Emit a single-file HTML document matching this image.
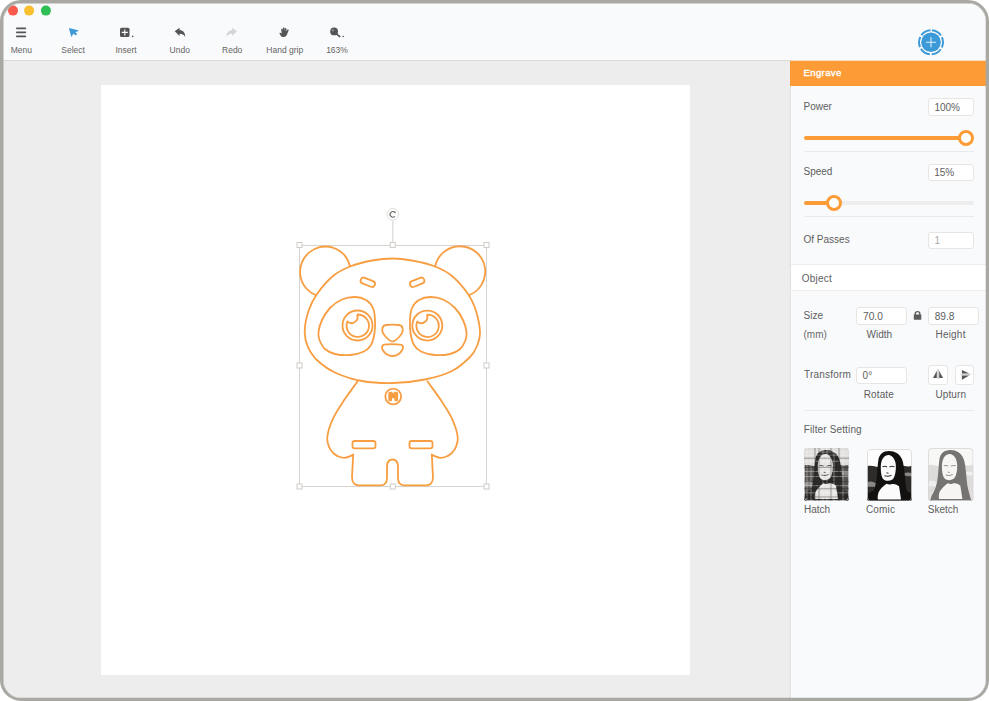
<!DOCTYPE html>
<html><head><meta charset="utf-8">
<style>
*{margin:0;padding:0;box-sizing:border-box}
html,body{width:989px;height:701px;background:#fff;overflow:hidden;font-family:"Liberation Sans",sans-serif}
.win{position:absolute;left:0;top:0;width:989px;height:701px;border:3px solid #a9a8a3;border-radius:21px;overflow:hidden;background:#f9fafb}
.a{position:absolute}
.t{position:absolute;white-space:nowrap;line-height:1}
.tb{position:absolute;top:0;left:0;width:983px;height:58px;background:#f9fafb;border-bottom:1px solid #dcdad7}
.lab{position:absolute;width:60px;text-align:center;font-size:8.5px;color:#656565;line-height:1;top:42.5px}
.canvas{position:absolute;left:0;top:58px;width:787px;height:640px;background:#ededed}
.page{position:absolute;left:98px;top:24px;width:589px;height:590px;background:#fff}
.panel{position:absolute;left:787px;top:58px;width:196px;height:640px;background:#f9fafc;border-left:1px solid #e0dfdc;box-shadow:inset 1px 0 #fdfeff}
.pl{position:absolute;font-size:10px;color:#5e5e5e;line-height:1;white-space:nowrap;margin-top:-1px}
.inp{position:absolute;background:#fff;border:1px solid #e8e6e3;border-radius:3px}
.sep{position:absolute;height:1px;background:#ebeae9}
.img{position:absolute;border-radius:3px;overflow:hidden;border:0px solid #ddd;line-height:0}
.h{position:absolute;width:6px;height:6px;background:#fff;border:1px solid #c9c6c2}
</style></head><body>
<svg width="0" height="0" style="position:absolute"><defs>
<filter id="bl" x="0" y="0" width="1" height="1"><feGaussianBlur stdDeviation=".5"/></filter>
<symbol id="mona" viewBox="0 0 45 52">
 <rect width="45" height="52" fill="var(--sky)"/>
 <path fill="var(--land)" d="M0,17 C6,15.5 9,18.5 13,17.5 L31,17 C36,15.5 40,18.5 45,16.5 L45,52 L0,52Z"/>
 <path fill="var(--lite)" d="M0,33 C4,31 8,33 10,35 L9,38 C5,37 2,38 0,37Z M37,24 C40,22.5 43,23.5 45,24 L45,27 C42,27 39,27 37,26Z"/>
 <path fill="var(--dress)" d="M0,44 C5,42 9,40 12,40 L34,40 C38,41 42,42 45,44 L45,52 L0,52Z"/>
 <path fill="var(--hair)" d="M22,2 C16,2 12.5,5.5 11.5,10 C10.5,15 10.5,22 9.5,30 C8.8,36 7,42 3.5,47 L2,52 L43,52 C41.5,47 40,42 38.8,36 C37.8,28 37.5,20 36,13 C34,5 28,2 22,2Z"/>
 <path fill="var(--face)" d="M21,6 C16.5,6.5 14,11 13.8,17.5 C13.7,23 14.5,28 16.5,30 C18.5,32 22.5,32 25,30.5 C27.5,29 28.8,24 28.9,17.5 C29,11 25.5,5.7 21,6Z"/>
 <path fill="var(--face)" d="M19.5,34.5 C16,37 13,40 11.5,43 C10.5,46 10.5,49 11,50 L34,50 C33.5,46 32.8,42 32,37 C30,35 27,34 24,35 C22,35.5 21,35 19.5,34.5Z"/>
 <path stroke="var(--feat)" stroke-width="1" fill="none" d="M15.5,17.5 Q18,16.5 20,17.8 M22.5,17.8 Q25,16.5 27.5,17.5 M19.5,23.5 L21.5,24 M17.5,26.5 Q21,27.5 24.5,26"/>
 <rect x=".5" y=".5" width="44" height="51" rx="3" fill="none" stroke="#d9d6d3" stroke-width=".8"/>
</symbol></defs></svg>
<div class="win">
 <div class="tb">
  <!-- icons -->
  <svg class="a" style="left:-3px;top:-3px" width="989" height="60" viewBox="0 0 989 60">
   <circle cx="13" cy="10.6" r="5" fill="#fa5a4b"/><circle cx="29.1" cy="10.6" r="5" fill="#f9bf2f"/><circle cx="45.9" cy="10.6" r="5" fill="#2fbe53"/>
   <g fill="#555">
    <rect x="16" y="27.6" width="10.2" height="1.6" rx=".8"/>
    <rect x="16" y="31.6" width="10.2" height="1.6" rx=".8"/>
    <rect x="16" y="35.6" width="10.2" height="1.6" rx=".8"/>
   </g>
   <path fill="#3d98d6" d="M68.9,28.1 L79,30.6 L75.3,32.4 L77.5,34.2 L75.2,35.3 L73.6,33.6 L71.3,37 Z"/>
   <rect x="120" y="27.7" width="9.5" height="9.4" rx="1.5" fill="#555"/>
   <path stroke="#fff" stroke-width="1.1" d="M121.8,32.4 H127.8 M124.8,29.4 V35.4"/>
   <circle cx="132.6" cy="36.4" r=".8" fill="#555"/>
   <path fill="#555" d="M174.7,31.2 L179.6,27.7 L179.6,29.9 C183.4,30.2 185.4,33 185.2,37 C184,34.7 182.2,33.8 179.6,33.8 L179.6,36 Z"/>
   <path fill="#d6d6d6" d="M237,31.2 L232.1,27.7 L232.1,29.9 C228.3,30.2 226.3,33 226.5,37 C227.7,34.7 229.5,33.8 232.1,33.8 L232.1,36 Z"/>
   <path fill="#555" d="M283.6,27.5 C284.4,27.5 284.6,28.2 284.6,28.8 L284.6,31 L285,28.6 C285.2,27.8 286.5,27.9 286.5,28.9 L286.1,31.4 L287.3,29.8 C287.8,29.1 289,29.6 288.6,30.5 L287,34.6 C286.2,36.4 285,37.1 283.5,37.1 C282,37.1 281.2,36.4 280.4,35.2 L279.6,33.8 C279.2,33 280.1,32.4 280.8,33 L281.6,33.8 L281.2,29.4 C281.1,28.5 282.4,28.4 282.6,29.2 L282.8,31 L282.8,28.6 C282.8,28 283,27.5 283.6,27.5Z"/>
   <circle cx="334.1" cy="31.4" r="3.9" fill="#555"/>
   <path d="M336.5,33.8 L339.8,36.6" stroke="#555" stroke-width="1.6" stroke-linecap="round"/>
   <circle cx="332.8" cy="30.2" r="1.2" fill="#888"/>
   <circle cx="343.2" cy="36.5" r=".8" fill="#555"/>
   <!-- add button -->
   <circle cx="931" cy="42.3" r="12" fill="none" stroke="#3d9ad8" stroke-width="2" stroke-dasharray="10.57 2" stroke-dashoffset="-1" transform="rotate(-90 931 42.3)"/>
   <circle cx="931" cy="42.3" r="9.8" fill="#3d9ad8"/>
   <path stroke="#dbeefa" stroke-width="1.1" d="M926,42.3 H936 M931,37.3 V47.3"/>
  </g>
  </svg>
  <div class="lab" style="left:-11.6px">Menu</div>
  <div class="lab" style="left:40.1px">Select</div>
  <div class="lab" style="left:93.1px">Insert</div>
  <div class="lab" style="left:146.75px">Undo</div>
  <div class="lab" style="left:199.2px">Redo</div>
  <div class="lab" style="left:251.8px">Hand grip</div>
  <div class="lab" style="left:304px">163%</div>
 </div>
 <div class="canvas">
  <div class="page"></div>
 </div>
 <div class="panel">
  <div class="a" style="left:-1px;top:-1px;width:196px;height:1px;background:#f6dcc0"></div><div class="a" style="left:-1px;top:0;width:196px;height:25px;background:#fd9b36"></div>
  <div class="pl" style="left:12.5px;top:8px;color:#fff;font-size:9.6px;letter-spacing:.35px;-webkit-text-stroke:.35px #fff">Engrave</div>
  <div class="pl" style="left:12.5px;top:42px">Power</div>
  <div class="inp" style="left:137px;top:37px;width:46px;height:18px"></div>
  <div class="pl" style="left:143.4px;top:43px">100%</div>
  <div class="a" style="left:13px;top:75.2px;width:162px;height:3.6px;border-radius:2px;background:#fd9b36"></div>
  <div class="a" style="left:167px;top:69px;width:16px;height:16px;border-radius:50%;background:#fff;border:3.3px solid #fd9b36"></div>
  <div class="sep" style="left:13px;top:90px;width:170px"></div>
  <div class="pl" style="left:12.5px;top:107px">Speed</div>
  <div class="inp" style="left:137px;top:103px;width:46px;height:17px"></div>
  <div class="pl" style="left:143.2px;top:108px">15%</div>
  <div class="a" style="left:13px;top:140px;width:170px;height:3.6px;border-radius:2px;background:#ededed"></div>
  <div class="a" style="left:13px;top:140px;width:30px;height:3.6px;border-radius:2px;background:#fd9b36"></div>
  <div class="a" style="left:34.6px;top:133.9px;width:16px;height:16px;border-radius:50%;background:#fff;border:3.3px solid #fd9b36"></div>
  <div class="sep" style="left:13px;top:155px;width:170px"></div>
  <div class="pl" style="left:12.5px;top:175px">Of Passes</div>
  <div class="inp" style="left:137px;top:170.5px;width:46px;height:17px"></div>
  <div class="pl" style="left:143.6px;top:176px;color:#aaa">1</div>
  <div class="a" style="left:0;top:203px;width:195px;height:27px;background:#fff;border-top:1px solid #efeeed;border-bottom:1px solid #efeeed"></div>
  <div class="pl" style="left:10.8px;top:213.5px;letter-spacing:.2px">Object</div>
  <div class="pl" style="left:12.5px;top:250.5px">Size</div>
  <div class="pl" style="left:12.5px;top:269.5px;color:#6a6a6a">(mm)</div>
  <div class="inp" style="left:65px;top:246px;width:50.5px;height:18px"></div>
  <div class="pl" style="left:72px;top:252px;font-size:10.2px">70.0</div>
  <div class="inp" style="left:137.4px;top:246px;width:50.2px;height:18px"></div>
  <div class="pl" style="left:143.7px;top:252px;font-size:10.2px">89.8</div>
  <div class="pl" style="left:75.5px;top:270px">Width</div>
  <div class="pl" style="left:144.5px;top:270px;letter-spacing:.2px">Height</div>
  <div class="pl" style="left:13px;top:310px;letter-spacing:.22px">Transform</div>
  <div class="inp" style="left:65px;top:305.7px;width:50.5px;height:17px"></div>
  <div class="pl" style="left:71.6px;top:311px">0&deg;</div>
  <div class="inp" style="left:137px;top:304px;width:20px;height:20px"></div>
  <div class="inp" style="left:164px;top:304px;width:19px;height:20px"></div>
  <div class="pl" style="left:72.8px;top:330px;letter-spacing:.1px">Rotate</div>
  <div class="pl" style="left:144.5px;top:330px;letter-spacing:.1px">Upturn</div>
  <div class="sep" style="left:13px;top:348.5px;width:170px"></div>
  <div class="pl" style="left:12.7px;top:365px;letter-spacing:.14px">Filter Setting</div>
  <svg class="a" style="left:0;top:0" width="195" height="460" viewBox="791 61 195 460">
   <path fill="#5e5c5a" d="M913.8,314.6 L914.6,314.6 L914.6,313.5 A2.95,2.6 0 0 1 920.5,313.5 L920.5,314.6 L921.3,314.6 L921.3,319.3 Q921.3,319.8 920.8,319.8 L914.3,319.8 Q913.8,319.8 913.8,319.3Z M916,314.6 L919.1,314.6 L919.1,313.6 A1.55,1.4 0 0 0 916,313.6Z"/>
   <path fill="#d3d2d0" d="M937,369.2 H939 V378.8 H937Z M960.6,373.7 H970.9 V375.2 H960.6Z"/>
   <path fill="#575553" d="M933,377.9 L936.8,370.8 L936.8,377.9Z M939.2,370.8 L943,377.9 L939.2,377.9Z M961.9,370 L969.3,373.4 L961.9,373.4Z M961.9,375.5 L969.3,375.5 L961.9,379.7Z"/>
  </svg>
  <div class="img" style="left:13px;top:387px;--sky:#e0dedc;--land:#555351;--lite:#8a8886;--dress:#2e2c2a;--hair:#2e2c2a;--face:#e6e4e2;--feat:#555"><svg width="45" height="53" viewBox="0 0 45 52" preserveAspectRatio="none"><use href="#mona"/><g stroke-width=".7" opacity=".55"><path stroke="#fff" d="M0,4H45M0,7H45M0,13H45M0,23H45M0,28H45M0,37H45M0,44H45M3,0V52M7,0V52M19,0V52M23,0V52M30,0V52M39,0V52"/><path stroke="#222" d="M0,10H45M0,19H45M0,33H45M0,40H45M0,48H45M11,0V52M15,0V52M27,0V52M35,0V52"/></g></svg></div>
  <div class="img" style="left:75.5px;top:387.5px;--sky:#fdfdfd;--land:#2e2c2b;--lite:#8a8887;--dress:#121110;--hair:#121110;--face:#fbfbfb;--feat:#333"><svg width="45" height="52.5" viewBox="0 0 45 52" preserveAspectRatio="none"><use href="#mona"/></svg></div>
  <div class="img" style="left:137px;top:387px;--sky:#f7f7f6;--land:#dedcdb;--lite:#efefef;--dress:#e2e0df;--hair:#767473;--face:#f6f5f4;--feat:#999"><svg width="45.5" height="53" viewBox="0 0 45 52" preserveAspectRatio="none"><use href="#mona"/></svg></div>
  <div class="pl" style="left:13px;top:444.5px">Hatch</div>
  <div class="pl" style="left:75px;top:444.5px;letter-spacing:.15px">Comic</div>
  <div class="pl" style="left:136.8px;top:444.5px">Sketch</div>
 </div>
 <svg class="a" style="left:-3px;top:-3px" width="989" height="701" viewBox="0 0 989 701">
  <g fill="none" stroke="#d6d3d0" stroke-width="1">
   <rect x="299.5" y="245.5" width="187" height="241"/>
   <line x1="392.8" y1="220.3" x2="392.8" y2="243"/>
   <circle cx="392.8" cy="214.3" r="5.8" fill="#fff" stroke="#e2dfdc"/>
  </g>
  <path d="M394.9,212.3 A2.8,2.9 0 1 0 394.9,216.4" fill="none" stroke="#6a6560" stroke-width="1.1"/>
  <path d="M395.6,211.2 L395.7,213.3 L393.8,212.6Z" fill="#6a6560"/>
  <g fill="#fff" stroke="#cfcbc7" stroke-width="1">
   <rect x="297" y="242.5" width="5" height="5"/>
   <rect x="390.3" y="242.5" width="5" height="5"/>
   <rect x="484" y="242.5" width="5" height="5"/>
   <rect x="297" y="363" width="5" height="5"/>
   <rect x="484" y="363" width="5" height="5"/>
   <rect x="297" y="484" width="5" height="5"/>
   <rect x="390.3" y="484" width="5" height="5"/>
   <rect x="484" y="484" width="5" height="5"/>
  </g>
  <g fill="none" stroke="#f89e42" stroke-width="1.8" stroke-linejoin="round">
<path d="M350.1,266.5 A25.3,25.3 0 1 0 316.2,295.4"/>
<path d="M435,267.1 A25.3,25.3 0 1 1 468.4,295.4"/>
<path d="M393.0,258.5 C399.7,258.5 405.0,259.2 412.0,260.5 C419.0,261.8 428.3,263.9 435.0,266.5 C441.7,269.1 446.5,271.4 452.0,276.0 C457.5,280.6 464.0,288.2 468.0,294.0 C472.0,299.8 474.0,304.7 476.0,311.0 C478.0,317.3 479.8,326.2 480.0,332.0 C480.2,337.8 478.7,341.8 477.0,346.0 C475.3,350.2 474.2,352.8 470.0,357.0 C465.8,361.2 459.5,367.2 452.0,371.0 C444.5,374.8 434.8,377.5 425.0,379.5 C415.2,381.5 403.5,382.8 393.0,383.0 C382.5,383.2 371.5,382.7 362.0,381.0 C352.5,379.3 343.3,376.3 336.0,373.0 C328.7,369.7 322.7,365.3 318.0,361.0 C313.3,356.7 310.2,351.8 308.0,347.0 C305.8,342.2 304.6,338.0 304.7,332.0 C304.8,326.0 306.4,317.3 308.5,311.0 C310.6,304.7 312.9,299.8 317.0,294.0 C321.1,288.2 327.5,280.6 333.0,276.0 C338.5,271.4 343.5,269.1 350.0,266.5 C356.5,263.9 364.8,261.8 372.0,260.5 C379.2,259.2 386.3,258.5 393.0,258.5Z"/>
<path d="M355.0,297.0 C359.0,297.1 363.0,298.2 366.0,300.0 C369.0,301.8 371.5,304.7 373.0,308.0 C374.5,311.3 374.8,315.8 375.0,320.0 C375.2,324.2 375.2,328.8 374.5,333.0 C373.8,337.2 372.8,341.9 371.0,345.0 C369.2,348.1 367.5,349.8 364.0,351.5 C360.5,353.2 354.8,354.6 350.0,355.0 C345.2,355.4 339.2,355.0 335.0,354.0 C330.8,353.0 327.6,351.3 325.0,349.0 C322.4,346.7 320.6,342.8 319.5,340.0 C318.4,337.2 318.1,335.3 318.5,332.0 C318.9,328.7 320.1,324.0 322.0,320.0 C323.9,316.0 326.7,311.4 330.0,308.0 C333.3,304.6 337.8,301.3 342.0,299.5 C346.2,297.7 351.0,296.9 355.0,297.0Z"/>
<path d="M443.0,299.5 C447.2,301.3 451.7,304.6 455.0,308.0 C458.3,311.4 461.1,316.0 463.0,320.0 C464.9,324.0 466.1,328.7 466.5,332.0 C466.9,335.3 466.6,337.2 465.5,340.0 C464.4,342.8 462.6,346.7 460.0,349.0 C457.4,351.3 454.2,353.0 450.0,354.0 C445.8,355.0 439.8,355.4 435.0,355.0 C430.2,354.6 424.5,353.2 421.0,351.5 C417.5,349.8 415.8,348.1 414.0,345.0 C412.2,341.9 411.2,337.2 410.5,333.0 C409.8,328.8 409.8,324.2 410.0,320.0 C410.2,315.8 410.5,311.3 412.0,308.0 C413.5,304.7 416.0,301.8 419.0,300.0 C422.0,298.2 426.0,297.1 430.0,297.0 C434.0,296.9 438.8,297.7 443.0,299.5Z"/>
<rect x="360.3" y="279.3" width="15" height="6" rx="3" transform="rotate(22 367.8 282.3)"/>
<rect x="409.7" y="279.3" width="15" height="6" rx="3" transform="rotate(-22 417.2 282.3)"/>
<circle cx="357.5" cy="325.5" r="15"/>
<path d="M356.97,314.53 A11.2,11.2 0 1 1 347.45,321.43 A6,6 0 0 0 356.97,314.53"/>
<circle cx="427.3" cy="325.6" r="15"/>
<path d="M426.77,314.63 A11.2,11.2 0 1 1 417.25,321.53 A6,6 0 0 0 426.77,314.63"/>
<path d="M386,325 C390,324.6 395,324.6 399,325 C402,325.4 403,328 402.7,331 C402.3,334.5 397,339.5 394.2,341 C393,341.6 392,341.6 390.8,341 C388,339.5 382.6,334.5 382.3,331 C382,328 383,325.4 386,325Z"/>
<path d="M384,344.6 Q392.5,343.6 401.5,344.8 Q404,346 402.5,349.5 Q399,356 392.5,356 Q386,356 382.5,349.5 Q381,346 384,344.6Z"/>
<path d="M358.0,380.7 C355.8,383.9 348.6,393.5 344.5,399.6 C340.4,405.8 336.4,411.4 333.5,417.6 C330.6,423.8 327.8,431.6 327.3,437.0 C326.8,442.4 328.7,446.5 330.4,449.7 C332.1,452.9 335.1,454.8 337.4,456.1 C339.7,457.5 342.1,457.8 344.2,457.8 C346.3,457.8 348.7,456.7 350.2,456.1 C351.7,455.5 352.7,454.7 353.2,454.4 L352,477.5 Q352.3,485.3 359,485.3 L381,485.3 Q386.8,485.2 387,478 L387,466 Q387.5,459.5 392.5,459.5 Q397.5,459.5 398,466 L398,478 Q398.2,485.2 404,485.3 L426,485.3 Q432.7,485.3 433,477.5 L431.8,454.4  C432.3,454.7 433.3,455.5 434.8,456.1 C436.3,456.7 438.7,457.8 440.8,457.8 C442.9,457.8 445.3,457.5 447.6,456.1 C449.9,454.8 452.9,452.9 454.6,449.7 C456.3,446.5 458.2,442.4 457.7,437.0 C457.2,431.6 454.4,423.8 451.5,417.6 C448.6,411.4 444.6,405.8 440.5,399.6 C436.4,393.5 429.2,383.9 427.0,380.7"/>
<rect x="352.5" y="441" width="23" height="7.3" rx="2"/>
<rect x="409.5" y="441" width="23" height="7.3" rx="2"/>
<circle cx="393.2" cy="396.5" r="7.9"/>
<path fill="#f89e42" stroke="none" d="M388.3,393.6 Q388.3,391.8 390.1,391.8 L391.4,391.8 Q392.5,391.8 392.8,393 L393.6,393 Q393.9,391.8 395,391.8 L396.3,391.8 Q398.1,391.8 398.1,393.6 L398.1,400.3 Q398.1,401.2 397.2,401.2 L395.3,401.2 Q394.4,401.2 394.4,400.3 L394.4,398.3 L392,398.3 L392,400.3 Q392,401.2 391.1,401.2 L389.2,401.2 Q388.3,401.2 388.3,400.3Z"/>
  </g>
 </svg>
<svg class="a" style="left:-3px;top:-3px" width="989" height="701" viewBox="0 0 989 701"><path fill="#a9a8a3" fill-rule="evenodd" d="M21,0 H968 A21,21 0 0 1 989,21 V680 A21,21 0 0 1 968,701 H21 A21,21 0 0 1 0,680 V21 A21,21 0 0 1 21,0Z M21,3.5 A17.5,17.5 0 0 0 3.5,21 V680.3 A17.5,17.5 0 0 0 21,697.8 H968.2 A17.5,17.5 0 0 0 985.7,680.3 V21 A17.5,17.5 0 0 0 968.2,3.5Z"/></svg>
</div>
</body></html>
